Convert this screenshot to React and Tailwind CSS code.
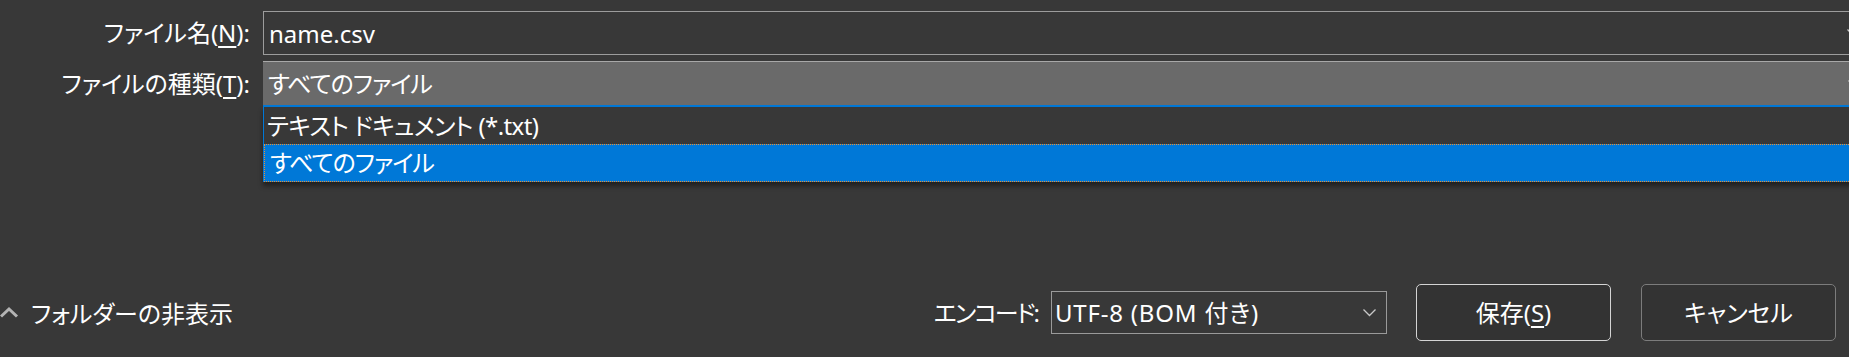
import React from "react";

const Chevron = ({ className = "" }) => (
  <svg width="13" height="8" viewBox="0 0 13 8" className={className}>
    <polyline points="0.5,0.5 6.5,6.5 12.5,0.5" fill="none" stroke="#c8c8c8" strokeWidth="1.3" />
  </svg>
);

export default function App() {
  return (
    <div
      className="relative w-[1849px] h-[357px] overflow-hidden bg-[#383838] text-white text-[24px] [font-feature-settings:'palt'] flex flex-col"
      style={{ fontFamily: '"Noto Sans", "Noto Sans CJK JP", sans-serif' }}
    >
      {/* Row 1 */}
      <div className="flex items-center mt-[11px] h-[44px]">
        <div className="w-[263px] pr-[13px] text-right leading-none">
          ファイル名(<span className="underline underline-offset-4">N</span>):
        </div>
        <div className="flex-1 h-[44px] -mr-[14px] border border-[#9c9c9c] flex items-center justify-between pl-[5px] pr-[2px]">
          <span className="leading-none pt-[2px]">name.csv</span>
          <Chevron />
        </div>
      </div>

      {/* Row 2 */}
      <div className="flex items-center mt-[6px] h-[46px]">
        <div className="w-[263px] pr-[13px] text-right leading-none">
          ファイルの種類(<span className="underline underline-offset-4">T</span>):
        </div>
        <div className="flex-1 h-[46px] -mr-[14px] bg-[#6a6a6a] border-t border-t-[#a8a8a8] border-b-2 border-b-[#0078d7] flex items-center justify-between pl-[5px] pr-[2px]">
          <span className="leading-none tracking-[-1px]">すべてのファイル</span>
          <Chevron />
        </div>
      </div>

      {/* Dropdown list (overlay) */}
      <div className="absolute left-[263px] top-[107px] right-[-4px] h-[75px] bg-[#383838] border-l border-l-[#0078d7] shadow-[0_4px_5px_rgba(0,0,0,0.45)] flex flex-col">
        <div className="h-[37px] flex items-center pl-[3px] leading-none tracking-[-0.6px]">
          テキスト ドキュメント (*.txt)
        </div>
        <div className="h-[38px] flex items-center pl-[5px] leading-none tracking-[-1px] bg-[#0078d7] border border-dotted border-[#f0902c]">
          すべてのファイル
        </div>
      </div>

      {/* Bottom row */}
      <div className="mt-auto mb-[16px] h-[57px] flex items-center">
        <div className="flex items-center">
          <svg width="19" height="12" viewBox="0 0 19 12" className="mt-[-2px]">
            <polyline points="1,10.5 9,3 17,10.5" fill="none" stroke="#b4b4b4" strokeWidth="3" />
          </svg>
          <span className="ml-[12px] leading-none pt-[2px]">フォルダーの非表示</span>
        </div>
        <div className="ml-auto flex items-center">
          <span className="leading-none mr-[13px] tracking-[-2px]">エンコード:</span>
          <div className="w-[336px] h-[43px] border border-[#9a9a9a] flex items-center justify-between pl-[3px] pr-[10px]">
            <span className="leading-none tracking-[0.8px]">UTF-8 (BOM 付き)</span>
            <Chevron />
          </div>
          <button className="ml-[29px] w-[195px] h-[57px] rounded-[5px] border border-[#d4d4d4] bg-[#333333] flex items-center justify-center leading-none">
            保存(<span className="underline underline-offset-4">S</span>)
          </button>
          <button className="ml-[30px] mr-[13px] w-[195px] h-[57px] rounded-[5px] border border-[#7c7c7c] bg-[#333333] flex items-center justify-center leading-none">
            キャンセル
          </button>
        </div>
      </div>
    </div>
  );
}
